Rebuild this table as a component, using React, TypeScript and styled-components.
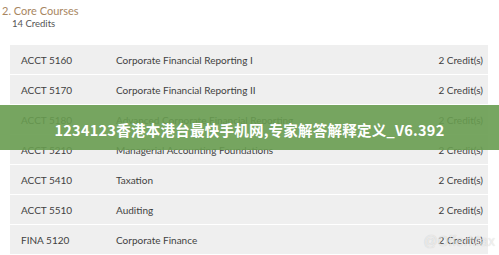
import styled, { createGlobalStyle } from 'styled-components';

const GlobalStyle = createGlobalStyle`
	html, body {
		margin: 0;
		padding: 0;
		background: #fff;
	}
	body {
		font-family: Lato, 'Liberation Sans', sans-serif;
	}
`;

const Page = styled.div`
	position: relative;
	width: 499px;
	height: 255px;
	overflow: hidden;
	background: #fff;
`;

const Section = styled.section`
	padding: 4px 0 0 2px;
`;

const Heading = styled.h2`
	margin: 0;
	font-size: 11px;
	font-weight: 400;
	line-height: 14px;
	color: #a8865f;
`;

const Sub = styled.div`
	margin: 0 0 0 10px;
	font-size: 9.5px;
	line-height: 12px;
	color: #555;
`;

const Table = styled.div`
	margin: 15px 0 0 10px;
	width: 478px;
	display: flex;
	flex-direction: column;
	gap: 1px;
`;

const Row = styled.div`
	display: grid;
	grid-template-columns: 95px 1fr auto;
	align-items: center;
	height: 29px;
	padding: 0 5px 0 11px;
	background: #efefef;
	font-size: 10px;
	color: #3f3f3f;
`;

const Credits = styled.span`
	text-align: right;
`;

const Banner = styled.div`
	position: absolute;
	left: 0;
	top: 105px;
	width: 100%;
	height: 45px;
	background: rgba(104, 156, 80, 0.9);
	display: flex;
	align-items: center;
	justify-content: center;
	color: #fff;
	font-family: 'Noto Sans CJK SC', 'Noto Sans', sans-serif;
	font-weight: 700;
	font-size: 14.5px;
	letter-spacing: 0.25px;
	padding-top: 4px;
	box-sizing: border-box;
`;

const Watermark = styled.div`
	position: absolute;
	right: 4px;
	bottom: 6px;
	font-family: 'Liberation Sans', sans-serif;
	font-size: 14px;
	color: rgba(255, 255, 255, 0.6);
	text-shadow: 0 0 1px rgba(0, 0, 0, 0.2);
`;

const courses = [
	['ACCT 5160', 'Corporate Financial Reporting I'],
	['ACCT 5170', 'Corporate Financial Reporting II'],
	['ACCT 5180', 'Advanced Corporate Financial Reporting'],
	['ACCT 5210', 'Managerial Accounting Foundations'],
	['ACCT 5410', 'Taxation'],
	['ACCT 5510', 'Auditing'],
	['FINA 5120', 'Corporate Finance'],
];

export default function App() {
	return (
		<Page>
			<GlobalStyle />
			<Section>
				<Heading>2. Core Courses</Heading>
				<Sub>14 Credits</Sub>
			</Section>
			<Table>
				{courses.map(([code, name]) => (
					<Row key={code}>
						<span>{code}</span>
						<span>{name}</span>
						<Credits>2 Credit(s)</Credits>
					</Row>
				))}
			</Table>
			<Banner>1234123香港本港台最快手机网,专家解答解释定义_V6.392</Banner>
			<Watermark>@OfferMax</Watermark>
		</Page>
	);
}
